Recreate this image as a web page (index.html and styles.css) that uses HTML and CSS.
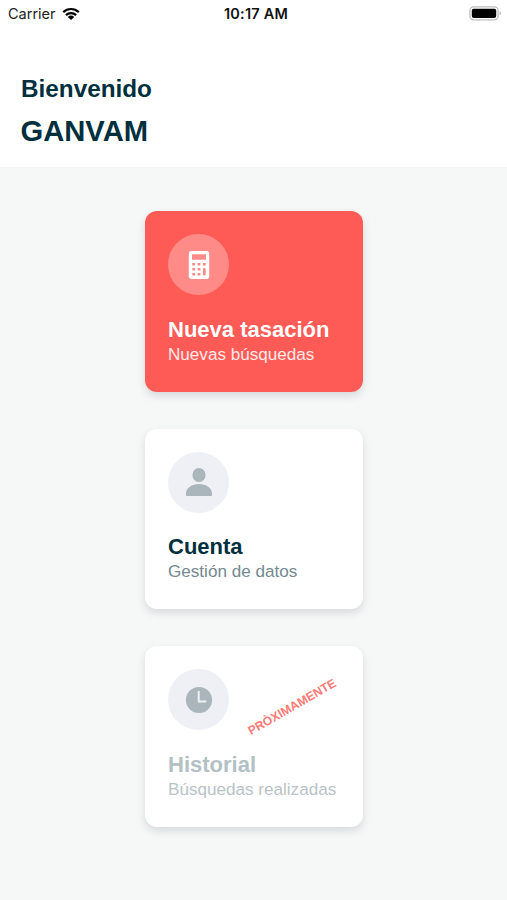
FILE: index.html
```html
<!DOCTYPE html>
<html lang="es">
<head>
<meta charset="utf-8">
<title>Bienvenido</title>
<link rel="stylesheet" href="styles.css">
</head>
<body>
<header class="header">
  <div class="status">
    <div class="carrier">
      <span>Carrier</span>
      <svg class="wifi" viewBox="0 0 18 13" width="18" height="13">
        <g fill="none" stroke="#000" stroke-width="2.2">
          <path d="M1.2 5.1a11.3 11.3 0 0 1 15.600 0"/>
          <path d="M3.9 8.1a7.4 7.4 0 0 1 10.200 0"/>
        </g>
        <path d="M5.8 10a4.7 4.7 0 0 1 6.4 0L9 13z"/>
      </svg>
    </div>
    <time class="time">10:17 AM</time>
    <svg class="battery" viewBox="0 0 33 15" width="33" height="15">
      <rect x=".9" y=".9" width="28.2" height="13" rx="3.8" fill="#fff" stroke="#bdbdbd" stroke-width="1.3"/>
      <rect x="2.8" y="2.8" width="24.4" height="9.2" rx="2" fill="#000"/>
      <path d="M30.6 5.3c1.6.6 1.6 3.6 0 4.2z" fill="#aaa"/>
    </svg>
  </div>
  <p class="welcome">Bienvenido</p>
  <h1 class="name">GANVAM</h1>
</header>
<main class="menu">
  <section class="card primary">
    <div class="icon">
      <svg viewBox="0 0 30 30" width="30" height="30">
        <path fill="#fff" fill-rule="evenodd" d="M7.500 1h15a2.700 2.700 0 0 1 2.700 2.700v22.600a2.700 2.700 0 0 1-2.700 2.700h-15a2.700 2.700 0 0 1-2.700-2.700V3.700A2.700 2.700 0 0 1 7.500 1zM8 4.300v5.500h14V4.300zM8.300 13v2.600h2.800V13zM13.600 13v2.600h2.800V13zM18.900 13v2.600h2.800V13zM8.300 18v2.600h2.800V18zM13.600 18v2.600h2.800V18zM8.300 23v2.600h2.800V23zM13.600 23v2.600h2.800V23zM18.900 19.400a1.400 1.400 0 0 1 2.800 0v4.800a1.400 1.400 0 0 1-2.800 0z"/>
      </svg>
    </div>
    <h2 class="title">Nueva tasación</h2>
    <p class="sub">Nuevas búsquedas</p>
  </section>
  <section class="card">
    <div class="icon">
      <svg viewBox="0 0 30 30" width="30" height="30" fill="#aab6bb">
        <ellipse cx="15" cy="8" rx="6.600" ry="7.100"/>
        <path d="M2 28.600v-2C2 21 8 17.100 15 17.100S28 21 28 26.600v2q0 .4-.6.400H2.600q-.6 0-.6-.4z"/>
      </svg>
    </div>
    <h2 class="title">Cuenta</h2>
    <p class="sub">Gestión de datos</p>
  </section>
  <section class="card disabled">
    <div class="icon">
      <svg viewBox="0 0 30 30" width="30" height="30">
        <circle cx="15" cy="15" r="13.100" fill="#aab6bb"/>
        <path d="M14.700 6.800v9.600h6.800" fill="none" stroke="#edf1f4" stroke-width="2" stroke-linecap="round" stroke-linejoin="round"/>
      </svg>
    </div>
    <span class="soon">PRÒXIMAMENTE</span>
    <h2 class="title">Historial</h2>
    <p class="sub">Búsquedas realizadas</p>
  </section>
</main>
</body>
</html>
```
FILE: styles.css
```css
* {
  box-sizing: border-box;
}

body {
  margin: 0;
  min-height: 900px;
  background: #f6f8f8;
  color: #002f3d;
  font-family: "Liberation Sans", Arial, sans-serif;
  overflow: hidden;
}

h1,
h2,
p {
  margin: 0;
}

.header {
  height: 167px;
  background: #fff;
  box-shadow: 0 0 2px rgba(0, 30, 40, 0.06);
}

.status {
  display: grid;
  grid-template-columns: 1fr auto 1fr;
  align-items: center;
  height: 27px;
  padding: 0 5px 0 8px;
  color: #111;
  font: 14.5px/27px Inter, sans-serif;
}

.carrier {
  display: flex;
  align-items: center;
  gap: 6px;
  color: #222;
}

.wifi {
  display: block;
}

.time {
  font-size: 14.5px;
  font-weight: 600;
  letter-spacing: 0.2px;
  margin-left: 2px;
}

.battery {
  justify-self: end;
}

.welcome {
  padding: 48px 0 0 21px;
  font-size: 24.3px;
  font-weight: 700;
  line-height: 28px;
}

.name {
  padding: 12px 0 0 20.5px;
  font-size: 29.2px;
  line-height: 32px;
}

.menu {
  display: flex;
  flex-direction: column;
  align-items: center;
  gap: 37px;
  padding-top: 44px;
}

.card {
  position: relative;
  width: 218px;
  height: 180.5px;
  padding: 23px 0 0 23.5px;
  border-radius: 12px;
  background: #fff;
  box-shadow: 0 4px 9px rgba(0, 20, 20, 0.13);
}

.icon {
  display: flex;
  align-items: center;
  justify-content: center;
  width: 61px;
  height: 61px;
  border-radius: 50%;
  background: #eff0f5;
}

.title {
  margin-top: 20.7px;
  font-size: 22px;
  line-height: 27px;
  white-space: nowrap;
}

.sub {
  margin-top: 1px;
  color: #738990;
  font-size: 17.1px;
  line-height: 22px;
  white-space: nowrap;
}

.primary {
  background: #ff5b56;
}

.primary .icon {
  background: #ff8b88;
}

.primary .title {
  color: #fff;
}

.primary .sub {
  color: #ffe9e8;
}

.disabled .title {
  color: #b3c0c4;
}

.disabled .sub {
  color: #b8c3c7;
}

.soon {
  position: absolute;
  left: 147.5px;
  top: 60.5px;
  transform: translate(-50%, -50%) rotate(-30deg);
  color: #fb7b78;
  font-size: 12.2px;
  font-weight: 700;
  line-height: 14px;
}
```
